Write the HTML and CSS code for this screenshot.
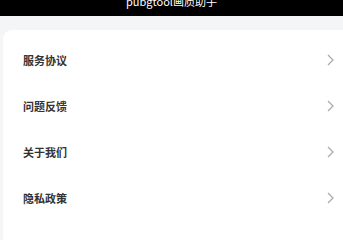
FILE: index.html
```html
<!DOCTYPE html>
<html lang="zh">
<head>
<meta charset="utf-8">
<link rel="stylesheet" href="styles.css">
</head>
<body>
<header class="topbar"><span class="title">pubgtool画质助手</span></header>
<main class="card">
  <div class="row"><span class="label">服务协议</span><svg class="chev" viewBox="0 0 7 12" width="7" height="12"><path d="M1 1 L6 6 L1 11" /></svg></div>
  <div class="row"><span class="label">问题反馈</span><svg class="chev" viewBox="0 0 7 12" width="7" height="12"><path d="M1 1 L6 6 L1 11" /></svg></div>
  <div class="row"><span class="label">关于我们</span><svg class="chev" viewBox="0 0 7 12" width="7" height="12"><path d="M1 1 L6 6 L1 11" /></svg></div>
  <div class="row"><span class="label">隐私政策</span><svg class="chev" viewBox="0 0 7 12" width="7" height="12"><path d="M1 1 L6 6 L1 11" /></svg></div>
</main>
</body>
</html>
```
FILE: styles.css
```css
html, body {
  margin: 0;
  padding: 0;
  height: 100%;
  overflow: hidden;
}
body {
  background: #f4f5f7;
  font-family: "Noto Sans CJK SC", "Noto Sans", sans-serif;
}
.topbar {
  height: 16px;
  background: #000;
  overflow: hidden;
  text-align: center;
}
.title {
  display: block;
  color: #fff;
  font-size: 11px;
  line-height: 16px;
  margin-top: -7px;
}
.card {
  box-sizing: border-box;
  margin: 14px -8px 0 3px;
  background: #fff;
  border-radius: 9px 9px 0 0;
  padding: 7px 17px 0 20px;
  height: calc(100vh - 30px);
}
.row {
  height: 46px;
  display: flex;
  align-items: center;
  justify-content: space-between;
}
.label {
  font-size: 11px;
  font-weight: 600;
  color: #333;
}
.chev path {
  fill: none;
  stroke: #a8a8a8;
  stroke-width: 1.2;
}
```
